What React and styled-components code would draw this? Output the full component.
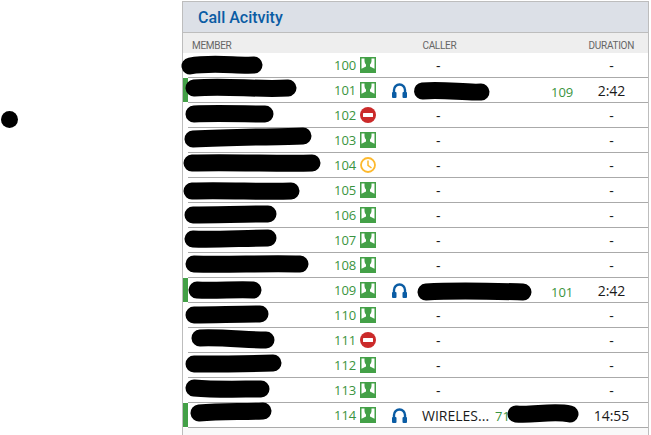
import React from "react"
import styled, { createGlobalStyle } from "styled-components"

const rows = [
  { ext: "100", status: "user", name: ["M8 66 C30 62 55 66 72 65", 182], caller: "-", time: "-" },
  { ext: "101", status: "user", active: true, name: ["M8 88 C40 85 70 90 102 88", 186], scribble: [414, "M8.5 91 C30 89 50 93 67 92"], ext2: "109", time: "2:42" },
  { ext: "102", status: "stop", name: ["M8 114 C30 113 60 114 79 114", 186], caller: "-", time: "-" },
  { ext: "103", status: "user", name: ["M8 139 C50 137 90 137 118 136", 185], caller: "-", time: "-" },
  { ext: "104", status: "clock", name: ["M8 163 C50 162 100 164 128 163", 184], caller: "-", time: "-" },
  { ext: "105", status: "user", name: ["M8 191 C40 190 80 192 107 191", 184], caller: "-", time: "-" },
  { ext: "106", status: "user", name: ["M8 215 C30 215 60 214 83 214", 185], caller: "-", time: "-" },
  { ext: "107", status: "user", name: ["M8 239 C30 240 60 238 83 238", 185], caller: "-", time: "-" },
  { ext: "108", status: "user", name: ["M8 264 C40 265 80 263 114 264", 186], caller: "-", time: "-" },
  { ext: "109", status: "user", active: true, name: ["M8 290 C25 291 50 289 64 290", 189], scribble: [417, "M9 292 C40 290 70 291 106 292"], ext2: "101", time: "2:42" },
  { ext: "110", status: "user", name: ["M8 315 C30 315 50 314 74 314", 186], caller: "-", time: "-" },
  { ext: "111", status: "stop", name: ["M8 338 C30 337 55 340 74 340", 192], caller: "-", time: "-" },
  { ext: "112", status: "user", name: ["M8 364 C30 364 60 364 87 363", 186], caller: "-", time: "-" },
  { ext: "113", status: "user", name: ["M8 388 C30 390 55 389 75 389", 186], caller: "-", time: "-" },
  { ext: "114", status: "user", active: true, name: ["M8 413 C30 411 50 412 72 411", 191], wireless: true, scribble: [507, "M9 414 C25 416 45 410 63 414"], time: "14:55" },
]

export default function App() {
  return (
    <>
      <GlobalStyle />
      <Page>
        <Gutter>
          <Dot />
        </Gutter>
        <Panel>
          <Header>Call Acitvity</Header>
          <Columns>
            <span>MEMBER</span>
            <CallerHead>CALLER</CallerHead>
            <DurationHead>DURATION</DurationHead>
          </Columns>
          {rows.map((r, i) => (
            <Row key={r.ext}>
              <ActiveBar $on={r.active} />
              <NameCell />
              <Ext>{r.ext}</Ext>
              <StatusCell><StatusIcon kind={r.status} /></StatusCell>
              <HeadsetCell>{r.active && <Headset />}</HeadsetCell>
              <CallerCell $dash={!r.active}>
                {r.wireless ? <>WIRELES...<Ext2 $tight>71</Ext2></> : r.caller}
              </CallerCell>
              <Ext2Cell>{r.ext2 && <Ext2>{r.ext2}</Ext2>}</Ext2Cell>
              <Duration>{r.time}</Duration>
              <Scribble d={r.name[0]} x={r.name[1]} rowTop={53 + i * 25} />
              {r.scribble && <Scribble d={r.scribble[1]} x={r.scribble[0]} rowTop={53 + i * 25} />}
            </Row>
          ))}
        </Panel>
      </Page>
    </>
  )
}

// black marker strokes hiding the names, x and path y are page coordinates
function Scribble({ d, x, rowTop }) {
  return (
    <Marker width="160" height="30" viewBox={`0 ${rowTop - 3} 160 30`} style={{ left: x - 183 }}>
      <path d={d} fill="none" stroke="#000" strokeWidth="17" strokeLinecap="round" />
    </Marker>
  )
}

function StatusIcon({ kind }) {
  if (kind === "stop") {
    return (
      <svg width="16" height="16" viewBox="0 0 16 16">
        <circle cx="8" cy="8" r="8" fill="#cb2a2a" />
        <rect x="3" y="6" width="10" height="4" rx="0.5" fill="#fff" />
      </svg>
    )
  }
  if (kind === "clock") {
    return (
      <svg width="16" height="16" viewBox="0 0 16 16">
        <circle cx="8" cy="8" r="7" fill="none" stroke="#fdb92e" strokeWidth="1.8" />
        <path d="M8 3.5V8.3L11.5 11" fill="none" stroke="#fdb92e" strokeWidth="1.5" />
      </svg>
    )
  }
  return (
    <svg width="16" height="16" viewBox="0 0 16 16">
      <rect width="16" height="16" fill="#43a047" />
      <path d="M1.5 1.5H4.5V4C4.5 5.5 5.5 7 6 7.5V9.5L1.5 11.8ZM14.5 1.5H11.5V4C11.5 5.5 10.5 7 10 7.5V9.5L14.5 11.8Z" fill="#fff" />
    </svg>
  )
}

function Headset() {
  return (
    <svg width="15" height="15" viewBox="0 0 15 15">
      <path d="M2 11V7A5.5 5.5 0 0 1 13 7V11" fill="none" stroke="#0a5ca4" strokeWidth="2.4" />
      <rect x="0" y="9" width="4.5" height="6" rx="1" fill="#0a5ca4" />
      <rect x="10.5" y="9" width="4.5" height="6" rx="1" fill="#0a5ca4" />
    </svg>
  )
}

const GlobalStyle = createGlobalStyle`
  html, body {
    margin: 0;
    background: #fff;
  }
`

const Page = styled.div`
  display: flex;
  width: 651px;
  height: 435px;
  overflow: hidden;
  font-family: "Open Sans", sans-serif;
`

const Gutter = styled.div`
  width: 182px;
  flex: none;
  padding: 111px 0 0 1px;
  box-sizing: border-box;
`

const Dot = styled.div`
  width: 17px;
  height: 17px;
  border-radius: 50%;
  background: #000;
`

const Panel = styled.div`
  width: 467px;
  height: 434px;
  margin-top: 1px;
  flex: none;
  box-sizing: border-box;
  border: 1px solid #bdbdbd;
  border-bottom: none;
  background: #f9f9f9;
`

const Header = styled.div`
  height: 31px;
  box-sizing: border-box;
  padding: 6px 0 0 15px;
  background: #dce0e7;
  border-bottom: 1px solid #bdbdbd;
  color: #0a5ca4;
  font-family: Roboto, sans-serif;
  font-size: 16px;
  font-weight: 500;
  line-height: 20px;
`

const Columns = styled.div`
  height: 20px;
  box-sizing: border-box;
  display: flex;
  align-items: center;
  padding: 4px 0 0 9px;
  background: #eeeeee;
  color: #666;
  font-family: Roboto, sans-serif;
  font-size: 10px;
  letter-spacing: -0.3px;
`

const CallerHead = styled.span`
  margin-left: 191px;
`

const DurationHead = styled.span`
  margin-left: auto;
  margin-right: 14px;
`

const Row = styled.div`
  position: relative;
  height: 25px;
  box-sizing: border-box;
  display: grid;
  grid-template-columns: 5px 146px 22px 35px 31px 129px 24px 1fr;
  align-items: center;
  background: #fff;
  &::after {
    content: "";
    position: absolute;
    left: 5px;
    right: 0;
    bottom: 0;
    height: 1px;
    background: #aaa;
  }
`

const ActiveBar = styled.div`
  height: 24px;
  align-self: start;
  background: ${(p) => (p.$on ? "#43a047" : "transparent")};
`

const NameCell = styled.div``

const Ext = styled.div`
  margin-bottom: 2px;
  color: #3a9440;
  font-size: 13px;
  font-weight: 500;
  text-align: right;
`

const StatusCell = styled.div`
  display: flex;
  align-items: center;
  margin-bottom: 2px;
  padding-left: 4px;
  svg {
    display: block;
  }
`

const HeadsetCell = styled.div`
  display: flex;
  align-items: center;
  padding-left: 1px;
  margin-bottom: 1px;
  svg {
    display: block;
  }
`

const CallerCell = styled.div`
  color: #1a1a1a;
  font-size: 14px;
  white-space: nowrap;
  padding-left: ${(p) => (p.$dash ? "14px" : "0")};
`

const Ext2Cell = styled.div`
  text-align: left;
`

const Ext2 = styled.span`
  color: #3a9440;
  font-size: 13px;
  font-weight: 500;
  margin-left: ${(p) => (p.$tight ? "6px" : "0")};
`

const Duration = styled.div`
  color: #1a1a1a;
  font-size: 14px;
  text-align: center;
`

const Marker = styled.svg`
  position: absolute;
  top: -3px;
  overflow: visible;
  pointer-events: none;
`
